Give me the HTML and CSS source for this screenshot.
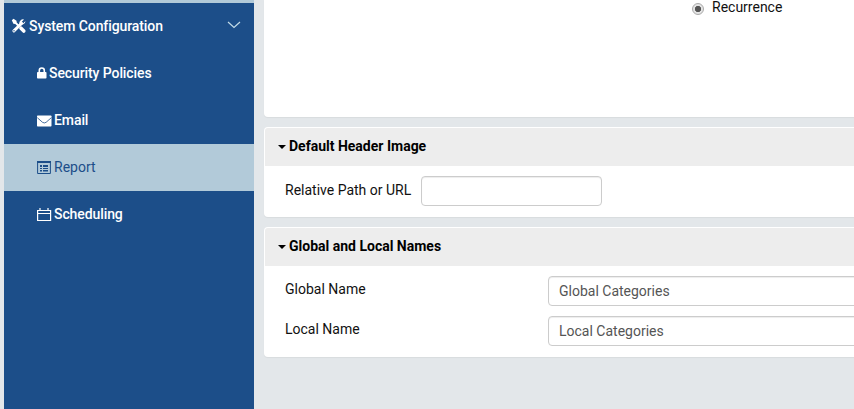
FILE: index.html
```
<!DOCTYPE html>
<html lang="en">
<head>
<meta charset="utf-8">
<title>System Configuration</title>
<link rel="stylesheet" href="styles.css">
</head>
<body>
<div class="app">
  <nav class="sidebar">
    <a class="item parent">
      <svg class="tools" width="16" height="16" viewBox="0 0 16 16"><path d="M.8 2.200L2.500.7l3 2 .2 1.900 3 3-1.400 1.400-3-3-1.900-.3z" fill="#fff"/><path d="M10 10.200l2.800 2.800" stroke="#fff" stroke-width="3.600" stroke-linecap="round"/><path d="M2.900 12.900L10.500 5.500" stroke="#fff" stroke-width="3" stroke-linecap="round"/><path d="M14.500 3L12.300 5.200l-1.500-1.500L13 1.500A3.800 3.800 0 0 0 8.300 5.800 3.800 3.800 0 0 0 14.500 3z" fill="#fff"/><circle cx="3" cy="12.800" r=".7" fill="#1c4e89"/></svg>
      <span class="label">System Configuration</span>
      <svg class="chevron" width="14" height="8" viewBox="0 0 14 8"><path d="M1 1l6 5.500L13 1" fill="none" stroke="#c3dce8" stroke-width="1.200"/></svg>
    </a>
    <a class="item">
      <svg class="lock" width="10" height="12" viewBox="0 0 10 12"><path d="M2.300 6V3.500a2.500 2.500 0 0 1 5 0V6" fill="none" stroke="#fff" stroke-width="1.600"/><rect x="0" y="5" width="9.500" height="6.500" rx=".8" fill="#fff"/></svg>
      <span class="label">Security Policies</span>
    </a>
    <a class="item">
      <svg class="icon" width="15" height="12" viewBox="0 0 15 12"><rect y=".5" width="14.500" height="11" rx=".7" fill="#fff"/><path d="M.3 2.700l5.200 4.600q1.800 1.300 3.600 0l5.200-4.600" fill="none" stroke="#1c4e89" stroke-width=".8"/></svg>
      <span class="label">Email</span>
    </a>
    <a class="item active">
      <svg class="icon" width="15" height="13" viewBox="0 0 15 13" fill="#1c4e89"><path d="M.6.5h12.800v12H.6z" fill="none" stroke="#1c4e89"/><path d="M0 0h14v2H0zM3 4h2v2H3zM6 4h5v2H6zM3 7h2v1H3zM6 7h5v1H6zM3 9h2v1.500H3zM6 9h5v1.500H6z"/></svg>
      <span class="label">Report</span>
    </a>
    <a class="item">
      <svg class="icon" width="15" height="13" viewBox="0 0 15 13"><path d="M.6 2.500h13v10H.6zM.6 5.500h13M3 0v2.500M11 0v2.500" fill="none" stroke="#fff" stroke-width="1.200"/></svg>
      <span class="label">Scheduling</span>
    </a>
  </nav>
  <main class="content">
    <section class="panel first">
      <div class="radio-row"><span class="radio"></span><span>Recurrence</span></div>
    </section>
    <section class="panel">
      <h2 class="head"><span class="caret"></span>Default Header Image</h2>
      <div class="row path-row"><span class="path-label">Relative Path or URL</span><span class="field short"></span></div>
    </section>
    <section class="panel">
      <h2 class="head"><span class="caret"></span>Global and Local Names</h2>
      <div class="rows">
        <div class="row"><span class="name">Global Name</span><span class="field">Global Categories</span></div>
        <div class="row"><span class="name">Local Name</span><span class="field">Local Categories</span></div>
      </div>
    </section>
  </main>
</div>
</body>
</html>
```
FILE: styles.css
```
* { box-sizing: border-box; }
body {
  margin: 0;
  overflow: hidden;
  background: #e3e7ea;
  color: #111;
  font: 14px/20px Roboto, sans-serif;
}
.app { display: flex; height: 409px; padding-left: 4px; }
.sidebar {
  width: 250px;
  flex: none;
  border-top: 3px solid #b2cad9;
  background: #1c4e89;
  color: #fff;
}
.item {
  display: flex;
  align-items: center;
  height: 47px;
  padding-left: 33px;
  font-weight: 500;
  letter-spacing: -.09px;
}
.label { margin-bottom: 2px; }
.parent { padding: 0 13px 0 7px; }
.tools { margin: 0 2px 1px 0; }
.lock { margin: 0 2px 1px 0; }
.icon { margin-right: 2px; }
.chevron { margin: 0 0 3px auto; }
.active { background: #b2cad9; color: #1c4e89; font-weight: 400; letter-spacing: 0; }
.content {
  flex: 1;
  min-width: 0;
  padding-left: 10px;
  display: flex;
  flex-direction: column;
  gap: 10px;
}
.panel {
  width: 610px;
  flex: none;
  height: 130px;
  padding: 1px;
  background: #fff;
  border-radius: 4px;
  box-shadow: 0 1px 1px rgba(0, 0, 0, .05);
}
.panel:nth-child(2) { height: 90px; }
.first { height: 117px; padding: 0; border-radius: 0 0 4px 4px; }
.radio-row { display: flex; align-items: center; gap: 8px; margin: -3px 0 0 428px; }
.radio {
  width: 12px;
  height: 12px;
  margin-top: 4px;
  border: 1px solid #aaa;
  border-radius: 50%;
  background: radial-gradient(circle, #555 0 2.8px, #e4e4e4 3.5px);
}
.head {
  display: flex;
  align-items: center;
  height: 38px;
  margin: 0;
  padding: 0 0 2px 13px;
  border-radius: 3px 3px 0 0;
  background: #ededed;
  color: #000;
  font-size: 14px;
  font-weight: 700;
}
.caret {
  margin: 1px 3px 0 0;
  border: 4px solid transparent;
  border-top-color: #000;
  border-bottom: 0;
}
.row { display: flex; padding-left: 20px; }
.path-row { padding-top: 10px; }
.rows { display: flex; flex-direction: column; gap: 10px; padding-top: 10px; }
.path-label { flex: none; width: 136px; padding-top: 4px; }
.name { flex: none; width: 263px; padding-top: 3px; }
.field {
  flex: none;
  width: 340px;
  height: 30px;
  padding: 4px 10px;
  border: 1px solid #ccc;
  border-radius: 4px;
  box-shadow: inset 0 1px 1px rgba(0, 0, 0, .075);
  color: #555;
}
.short { width: 181px; }
```
